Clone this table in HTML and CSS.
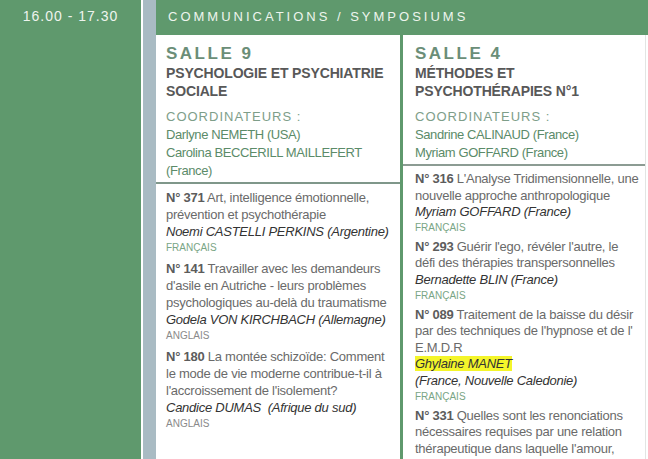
FILE: index.html
```html
<!DOCTYPE html>
<html lang="fr">
<head>
<meta charset="utf-8">
<title>Programme</title>
<link rel="stylesheet" href="styles.css">
</head>
<body>
<div class="page">
  <div class="time">16.00 - 17.30</div>
  <div class="stripe"></div>
  <div class="main">
    <div class="type">COMMUNICATIONS / SYMPOSIUMS</div>
    <div class="rooms">
      <section class="room room--left">
        <header class="room-head">
          <h2 class="room-name">SALLE 9</h2>
          <h3 class="room-theme">PSYCHOLOGIE ET PSYCHIATRIE SOCIALE</h3>
          <div class="coord-label">COORDINATEURS :</div>
          <div class="coord">Darlyne NEMETH (USA)</div>
          <div class="coord">Carolina BECCERILL MAILLEFERT (France)</div>
        </header>
        <div class="talks">
          <div class="talk">
            <p class="talk-title"><b>N° 371</b> Art, intelligence émotionnelle, prévention et psychothérapie</p>
            <p class="talk-author">Noemi CASTELLI PERKINS (Argentine)</p>
            <p class="lang lang--fr">FRANÇAIS</p>
          </div>
          <div class="talk">
            <p class="talk-title"><b>N° 141</b> Travailler avec les demandeurs d'asile en Autriche - leurs problèmes psychologiques au-delà du traumatisme</p>
            <p class="talk-author">Godela VON KIRCHBACH (Allemagne)</p>
            <p class="lang lang--en">ANGLAIS</p>
          </div>
          <div class="talk">
            <p class="talk-title"><b>N° 180</b> La montée schizoïde: Comment le mode de vie moderne contribue-t-il à l'accroissement de l'isolement?</p>
            <p class="talk-author">Candice DUMAS&nbsp; (Afrique du sud)</p>
            <p class="lang lang--en">ANGLAIS</p>
          </div>
        </div>
      </section>
      <section class="room room--right">
        <header class="room-head">
          <h2 class="room-name">SALLE 4</h2>
          <h3 class="room-theme">MÉTHODES ET PSYCHOTHÉRAPIES N°1</h3>
          <div class="coord-label">COORDINATEURS :</div>
          <div class="coord">Sandrine CALINAUD (France)</div>
          <div class="coord">Myriam GOFFARD (France)</div>
        </header>
        <div class="talks">
          <div class="talk">
            <p class="talk-title"><b>N° 316</b> L'Analyse Tridimensionnelle, une nouvelle approche anthropologique</p>
            <p class="talk-author">Myriam GOFFARD (France)</p>
            <p class="lang lang--fr">FRANÇAIS</p>
          </div>
          <div class="talk">
            <p class="talk-title"><b>N° 293</b> Guérir l'ego, révéler l'autre, le<br>défi des thérapies transpersonnelles</p>
            <p class="talk-author">Bernadette BLIN (France)</p>
            <p class="lang lang--fr">FRANÇAIS</p>
          </div>
          <div class="talk">
            <p class="talk-title"><b>N° 089</b> Traitement de la baisse du désir par des techniques de l'hypnose et de l' E.M.D.R</p>
            <p class="talk-author"><mark class="hl">Ghylaine MANET</mark></p>
            <p class="talk-author">(France, Nouvelle Caledonie)</p>
            <p class="lang lang--fr">FRANÇAIS</p>
          </div>
          <div class="talk">
            <p class="talk-title"><b>N° 331</b> Quelles sont les renonciations nécessaires requises par une relation thérapeutique dans laquelle l'amour, l'intimité et la sécurité sont nécessaires</p>
          </div>
        </div>
      </section>
    </div>
  </div>
</div>
</body>
</html>
```

FILE: styles.css
```css
* { box-sizing: border-box; }
html, body { margin: 0; padding: 0; background: #fff; }
body { font-family: "Liberation Sans", Arial, sans-serif; }

.page {
  display: flex;
  height: 459px;
  overflow: hidden;
}

.time {
  width: 141px;
  flex: none;
  background: #5f996d;
  color: #eef4ee;
  font-size: 14px;
  letter-spacing: 1px;
  text-align: center;
  padding-top: 8px;
  line-height: 16px;
  margin-right: 2px;
}

.stripe {
  width: 13px;
  flex: none;
  background: #a9bbc3;
}

.main {
  flex: 1;
  display: flex;
  flex-direction: column;
  min-width: 0;
}

.type {
  height: 35px;
  flex: none;
  background: #5f996d;
  color: #eef5ee;
  font-size: 13px;
  letter-spacing: 3px;
  line-height: 33px;
  padding-left: 12px;
}

.rooms {
  flex: 1;
  display: grid;
  grid-template-columns: 244px 246px;
}

.room--right {
  border-left: 3px solid #5f996d;
  border-right: 1px solid #e2e5e3;
}

.room-head {
  padding: 9px 8px 2px 10px;
  border-bottom: 2px solid #7f978a;
}
.room--right .room-head { padding-left: 12px; padding-right: 0; border-bottom-color: #8c9c93; }

.room-name {
  margin: 0;
  font-size: 17px;
  line-height: 20px;
  font-weight: bold;
  letter-spacing: 2.5px;
  color: #6b8e78;
}

.room-theme {
  margin: 0;
  font-size: 14px;
  line-height: 18px;
  font-weight: bold;
  color: #585858;
  letter-spacing: -0.15px;
}

.coord-label {
  margin-top: 8px;
  font-size: 13px;
  line-height: 18px;
  letter-spacing: 1px;
  color: #7e9e89;
}

.coord {
  font-size: 13px;
  line-height: 18px;
  letter-spacing: -0.4px;
  color: #5b8b69;
}

.talks { padding: 5px 8px 0 10px; }
.room--right .talks { padding-left: 12px; padding-right: 0; }

.talk { margin-bottom: 5px; }

.talk p { margin: 0; }

.talk-title {
  font-size: 13px;
  line-height: 17px;
  letter-spacing: -0.25px;
  color: #6a6a6a;
}
.talk-title b { color: #5c5c5c; }

.talk-author {
  font-size: 13px;
  line-height: 17px;
  letter-spacing: -0.25px;
  font-style: italic;
  color: #333;
}

.hl { background: #f4f52a; color: #333; padding: 0; }

.lang {
  font-size: 10px;
  line-height: 15px;
}
.lang--fr { color: #79a585; }
.lang--en { color: #8a8a8a; }

.room--right .talk-title,
.room--right .talk-author { line-height: 16.6px; }
.room--right .lang { line-height: 13px; }
```
